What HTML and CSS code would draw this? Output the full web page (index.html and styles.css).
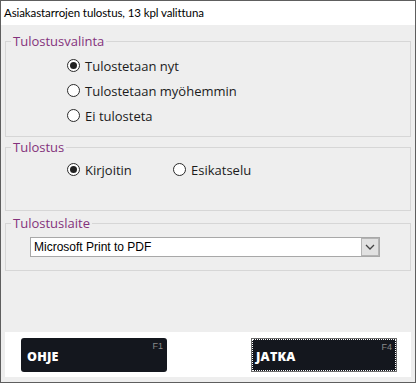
FILE: index.html
```html
<!DOCTYPE html>
<html>
<head>
<meta charset="utf-8">
<link rel="stylesheet" href="styles.css">
</head>
<body>
<div class="window">
  <div class="titlebar">Asiakastarrojen tulostus, 13 kpl valittuna</div>
  <div class="content">
    <fieldset class="group g1">
      <legend>Tulostusvalinta</legend>
      <div class="inner">
        <label class="radio"><span class="dot checked"></span>Tulostetaan nyt</label>
        <label class="radio"><span class="dot"></span>Tulostetaan myöhemmin</label>
        <label class="radio"><span class="dot"></span>Ei tulosteta</label>
      </div>
    </fieldset>
    <fieldset class="group g2">
      <legend>Tulostus</legend>
      <div class="inner row">
        <label class="radio first"><span class="dot checked"></span>Kirjoitin</label>
        <label class="radio"><span class="dot"></span>Esikatselu</label>
      </div>
    </fieldset>
    <fieldset class="group g3">
      <legend>Tulostuslaite</legend>
      <div class="select">
        <span class="value">Microsoft Print to PDF</span>
        <span class="arrow"><svg width="10" height="6" viewBox="0 0 10 6"><path d="M1 1 L5 5 L9 1" fill="none" stroke="#444" stroke-width="1.3"/></svg></span>
      </div>
    </fieldset>
    <div class="buttons">
      <div class="btn"><span class="btn-label">OHJE</span><span class="key">F1</span></div>
      <div class="btn focus"><span class="btn-label">JATKA</span><span class="key">F4</span></div>
    </div>
  </div>
</div>
</body>
</html>
```

FILE: styles.css
```css
html, body {
  margin: 0;
  padding: 0;
}
body {
  width: 416px;
  height: 383px;
  overflow: hidden;
}
.window {
  box-sizing: border-box;
  width: 416px;
  height: 383px;
  border: 1px solid #5e5e5e;
  display: flex;
  flex-direction: column;
  background: #eeeeee;
}
.titlebar {
  height: 24px;
  flex: none;
  background: #ffffff;
  font-family: "Lato", sans-serif;
  font-size: 11.5px;
  letter-spacing: -0.1px;
  line-height: 24px;
  padding-left: 3px;
  color: #000;
  white-space: nowrap;
}
.content {
  flex: 1;
  display: flex;
  flex-direction: column;
  padding: 0 4px;
}
.group {
  margin: 0;
  border: 1px solid #d6d6d6;
  padding: 0;
  font-family: "Open Sans", sans-serif;
}
.group legend {
  font-size: 13px;
  line-height: 14px;
  color: #84327c;
  padding: 0 2px;
  margin-left: 5px;
}
.g1 {
  margin-top: 9px;
  padding: 5px 0 8px 0;
}
.g2 {
  margin-top: 3px;
  padding: 3px 0 28px 0;
}
.g3 {
  margin-top: 5px;
  padding: 7px 0 13px 24px;
}
.g3 legend {
  margin-left: -19px;
}
.inner {
  padding-left: 61px;
}
.radio {
  display: flex;
  align-items: center;
  height: 25px;
  font-size: 13px;
  color: #1b1b1b;
}
.row {
  display: flex;
}
.radio.first {
  width: 106px;
}
.dot {
  box-sizing: border-box;
  width: 13px;
  height: 13px;
  border: 1px solid #2a2a2a;
  border-radius: 50%;
  background: #fff;
  margin-right: 5px;
  display: flex;
  align-items: center;
  justify-content: center;
}
.dot.checked::after {
  content: "";
  width: 7px;
  height: 7px;
  border-radius: 50%;
  background: #222;
}
.select {
  box-sizing: border-box;
  width: 350px;
  height: 20px;
  border: 1px solid #a8a8a8;
  background: #fff;
  display: flex;
  align-items: center;
}
.select .value {
  flex: 1;
  font-family: "Liberation Sans", Arial, sans-serif;
  font-size: 12px;
  color: #000;
  padding-left: 3px;
}
.select .arrow {
  box-sizing: border-box;
  width: 18px;
  height: 18px;
  background: #e1e1e1;
  border: 1px solid #b4b4b4;
  display: flex;
  align-items: center;
  justify-content: center;
}
.buttons {
  margin-top: auto;
  margin-bottom: 5px;
  height: 45px;
  box-sizing: border-box;
  background: #fff;
  padding: 6px 14px 0 16px;
  display: flex;
  justify-content: space-between;
  align-items: flex-start;
}
.btn {
  position: relative;
  box-sizing: border-box;
  width: 146px;
  height: 34px;
  background: #14171e;
  border-radius: 3px;
  display: flex;
  align-items: center;
  padding-left: 6px;
  padding-top: 3px;
}
.btn.focus {
  border-radius: 0;
  border: 1px solid #6e6e6e;
  outline: 1px dotted #ffffff;
  outline-offset: -2px;
  padding-left: 4px;
}
.btn-label {
  font-family: "Open Sans", sans-serif;
  font-weight: 800;
  font-size: 12.5px;
  color: #fff;
  letter-spacing: 0.2px;
}
.key {
  position: absolute;
  top: 3px;
  right: 4px;
  font-family: "Liberation Sans", sans-serif;
  font-size: 9px;
  color: #8a8a8a;
}
```
